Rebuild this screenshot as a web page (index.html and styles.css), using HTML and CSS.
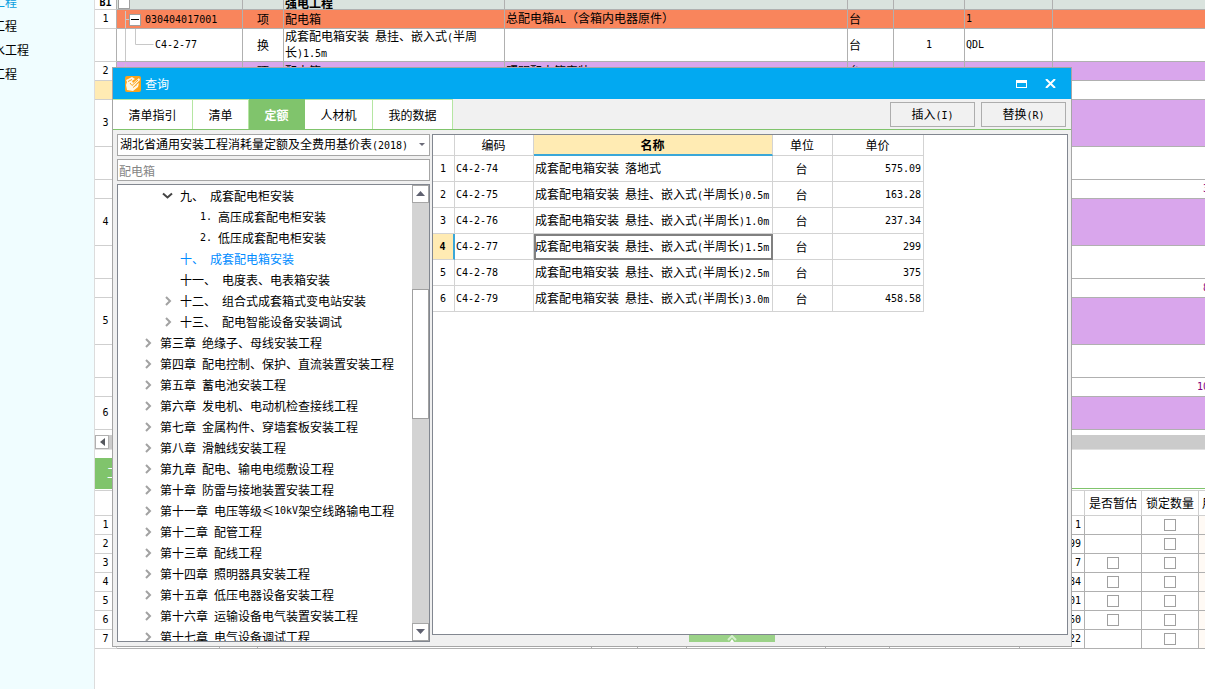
FILE: index.html
```
<!DOCTYPE html>
<html lang="zh-CN">
<head>
<meta charset="utf-8">
<title>查询</title>
<link rel="stylesheet" href="styles.css">
</head>
<body>
<aside class="side">
  <ul class="projects">
    <li class="active">工程</li>
    <li>工程</li>
    <li>水工程</li>
    <li>工程</li>
  </ul>
</aside>

<main class="main">
  <table class="bill">
    <colgroup>
      <col class="w-no"><col class="w-code"><col class="w-kind"><col class="w-title"><col class="w-feature"><col class="w-unit"><col class="w-qty"><col class="w-expr"><col>
    </colgroup>
    <tbody>
      <tr class="r-top">
        <th><div class="clip n">B1</div></th>
        <td><div class="clip"><button class="fold" aria-label="折叠"></button></div></td>
        <td></td><td><div class="clip">强电工程</div></td><td></td><td></td><td></td><td></td><td></td>
      </tr>
      <tr class="r-low orange">
        <th class="n">1</th>
        <td class="code"><svg class="guide" width="12" height="18" viewBox="0 0 12 18"><path d="M8.500 0v18M8.500 8.500h3.500"/></svg><button class="fold" aria-label="折叠"><svg width="10" height="10" viewBox="0 0 10 10"><path d="M1 4.500h8"/></svg></button><span class="n">030404017001</span></td>
        <td class="mid">项</td><td>配电箱</td><td>总配电箱<span class="n">AL</span>（含箱内电器原件）</td><td>台</td><td></td><td class="n">1</td><td></td>
      </tr>
      <tr class="r-mid">
        <th></th>
        <td class="code"><svg class="guide" width="38" height="32" viewBox="0 0 38 32"><path d="M8.500 0v32M18.500 0v15.500h18"/></svg><span class="n">C4-2-77</span></td>
        <td class="mid">换</td><td class="two">成套配电箱安装<span class="n"> </span>悬挂、嵌入式<span class="n">(</span>半周<br>长<span class="n">)1.5m</span></td><td></td><td>台</td><td class="n mid">1</td><td class="n">QDL</td><td></td>
      </tr>
      <tr class="r-low purple">
        <th class="n">2</th>
        <td class="code"><svg class="guide" width="12" height="18" viewBox="0 0 12 18"><path d="M8.500 0v18M8.500 8.500h3.500"/></svg><button class="fold" aria-label="折叠"><svg width="10" height="10" viewBox="0 0 10 10"><path d="M1 4.500h8"/></svg></button></td>
        <td class="mid">项</td><td>配电箱</td><td>照明配电箱安装</td><td>台</td><td></td><td></td><td></td>
      </tr>
      <tr class="r-low"><th class="current"></th><td></td><td></td><td></td><td></td><td></td><td></td><td></td><td></td></tr>
      <tr class="r-high purple"><th class="n">3</th><td></td><td></td><td></td><td></td><td></td><td></td><td></td><td></td></tr>
      <tr class="r-mid"><th></th><td></td><td></td><td></td><td></td><td></td><td></td><td></td><td></td></tr>
      <tr class="r-low"><th></th><td></td><td></td><td></td><td></td><td></td><td></td><td></td><td class="sum"><span class="n edge">3</span></td></tr>
      <tr class="r-high purple"><th class="n">4</th><td></td><td></td><td></td><td></td><td></td><td></td><td></td><td></td></tr>
      <tr class="r-mid"><th></th><td></td><td></td><td></td><td></td><td></td><td></td><td></td><td></td></tr>
      <tr class="r-low"><th></th><td></td><td></td><td></td><td></td><td></td><td></td><td></td><td class="sum"><span class="n edge">8</span></td></tr>
      <tr class="r-high purple"><th class="n">5</th><td></td><td></td><td></td><td></td><td></td><td></td><td></td><td></td></tr>
      <tr class="r-mid"><th></th><td></td><td></td><td></td><td></td><td></td><td></td><td></td><td></td></tr>
      <tr class="r-low"><th></th><td></td><td></td><td></td><td></td><td></td><td></td><td></td><td class="sum"><span class="n edge wide">10</span></td></tr>
      <tr class="r-mid purple"><th class="n">6</th><td></td><td></td><td></td><td></td><td></td><td></td><td></td><td></td></tr>
    </tbody>
  </table>

  <div class="hscroll">
    <button class="left" aria-label="向左滚动"><svg width="5" height="8" viewBox="0 0 5 8"><path d="M5 0v8L0 4z"/></svg></button>
  </div>

  <div class="strip"><button class="strip-tab">工</button></div>

  <table class="detail">
    <colgroup>
      <col class="w-no"><col class="d1"><col class="d2"><col class="d3"><col class="d4"><col class="d5"><col class="d6"><col class="d7"><col class="d8"><col class="d9"><col class="d10"><col class="d10"><col>
    </colgroup>
    <thead>
      <tr><th></th><th></th><th></th><th></th><th></th><th></th><th></th><th></th><th></th><th></th><th>是否暂估</th><th>锁定数量</th><th class="cut">用</th></tr>
    </thead>
    <tbody>
      <tr><th class="n">1</th><td></td><td></td><td></td><td></td><td></td><td></td><td></td><td></td><td class="n num">1</td><td></td><td><input type="checkbox" aria-label="锁定数量 1"></td><td class="cream"></td></tr>
      <tr><th class="n">2</th><td></td><td></td><td></td><td></td><td></td><td></td><td></td><td></td><td class="n num">99</td><td></td><td><input type="checkbox" aria-label="锁定数量 2"></td><td class="cream"></td></tr>
      <tr><th class="n">3</th><td></td><td></td><td></td><td></td><td></td><td></td><td></td><td></td><td class="n num">7</td><td><input type="checkbox" aria-label="是否暂估 3"></td><td><input type="checkbox" aria-label="锁定数量 3"></td><td class="cream"></td></tr>
      <tr><th class="n">4</th><td></td><td></td><td></td><td></td><td></td><td></td><td></td><td></td><td class="n num">84</td><td><input type="checkbox" aria-label="是否暂估 4"></td><td><input type="checkbox" aria-label="锁定数量 4"></td><td class="cream"></td></tr>
      <tr><th class="n">5</th><td></td><td></td><td></td><td></td><td></td><td></td><td></td><td></td><td class="n num">01</td><td><input type="checkbox" aria-label="是否暂估 5"></td><td><input type="checkbox" aria-label="锁定数量 5"></td><td class="cream"></td></tr>
      <tr><th class="n">6</th><td></td><td></td><td></td><td></td><td></td><td></td><td></td><td></td><td class="n num">60</td><td><input type="checkbox" aria-label="是否暂估 6"></td><td><input type="checkbox" aria-label="锁定数量 6"></td><td class="cream"></td></tr>
      <tr><th class="n">7</th><td></td><td></td><td></td><td></td><td></td><td></td><td></td><td></td><td class="n num">22</td><td></td><td><input type="checkbox" aria-label="锁定数量 7"></td><td class="cream"></td></tr>
    </tbody>
  </table>
</main>

<section class="dialog" role="dialog" aria-labelledby="dialog-title">
  <header class="titlebar">
    <svg class="logo" width="16" height="16" viewBox="0 0 16 16"><rect width="16" height="16" rx="2" fill="#fba31c"/><path d="M1 4l6-3 3 2-3 2 1 2 6-5 1 2-6 6 5-3-1 4-5 4-6-1-1-5 1-3z" fill="#fff6e6"/><path d="M3 5.500l4-2M5 7l2 2.500 6-5.500M8 11.500l4-3" fill="none" stroke="#fba31c"/></svg>
    <h1 id="dialog-title">查询</h1>
    <button class="win" aria-label="最大化"><svg width="11" height="8" viewBox="0 0 11 8"><path d="M0 0h11v8H0zM1 3v4h9V3z" fill="#fff" fill-rule="evenodd"/></svg></button>
    <button class="win" aria-label="关闭"><svg width="11" height="9" viewBox="0 0 11 9"><path d="M1 0l9 9M10 0L1 9" fill="none" stroke="#fff" stroke-width="2"/></svg></button>
  </header>

  <nav class="toolbar">
    <button class="tab t80">清单指引</button>
    <button class="tab t56">清单</button>
    <button class="tab t56 on">定额</button>
    <button class="tab t68">人材机</button>
    <button class="tab t80">我的数据</button>
    <div class="actions">
      <button class="act">插入<span class="n">(I)</span></button>
      <button class="act">替换<span class="n">(R)</span></button>
    </div>
  </nav>

  <div class="content">
    <div class="left-pane">
      <button class="library" aria-haspopup="listbox" aria-label="定额库"><span>湖北省通用安装工程消耗量定额及全费用基价表<span class="n">(2018)</span></span><svg width="6" height="4" viewBox="0 0 6 4"><path d="M0 0h6L3 3z"/></svg></button>
      <input class="search" type="text" placeholder="配电箱" aria-label="搜索">
      <div class="tree-box">
        <ul class="tree">
          <li class="l2"><svg class="open" width="11" height="11" viewBox="0 0 11 11"><path d="M1 3.500l4.500 4 4.500-4"/></svg>九、<span class="n"> </span>成套配电柜安装</li>
          <li class="l3"><span class="n">1. </span>高压成套配电柜安装</li>
          <li class="l3"><span class="n">2. </span>低压成套配电柜安装</li>
          <li class="l2 leaf chosen">十、<span class="n"> </span>成套配电箱安装</li>
          <li class="l2 leaf">十一、<span class="n"> </span>电度表、电表箱安装</li>
          <li class="l2"><svg width="11" height="11" viewBox="0 0 11 11"><path d="M4 2l4 4-4 4"/></svg>十二、<span class="n"> </span>组合式成套箱式变电站安装</li>
          <li class="l2"><svg width="11" height="11" viewBox="0 0 11 11"><path d="M4 2l4 4-4 4"/></svg>十三、<span class="n"> </span>配电智能设备安装调试</li>
          <li><svg width="11" height="11" viewBox="0 0 11 11"><path d="M4 2l4 4-4 4"/></svg>第三章<span class="n"> </span>绝缘子、母线安装工程</li>
          <li><svg width="11" height="11" viewBox="0 0 11 11"><path d="M4 2l4 4-4 4"/></svg>第四章<span class="n"> </span>配电控制、保护、直流装置安装工程</li>
          <li><svg width="11" height="11" viewBox="0 0 11 11"><path d="M4 2l4 4-4 4"/></svg>第五章<span class="n"> </span>蓄电池安装工程</li>
          <li><svg width="11" height="11" viewBox="0 0 11 11"><path d="M4 2l4 4-4 4"/></svg>第六章<span class="n"> </span>发电机、电动机检查接线工程</li>
          <li><svg width="11" height="11" viewBox="0 0 11 11"><path d="M4 2l4 4-4 4"/></svg>第七章<span class="n"> </span>金属构件、穿墙套板安装工程</li>
          <li><svg width="11" height="11" viewBox="0 0 11 11"><path d="M4 2l4 4-4 4"/></svg>第八章<span class="n"> </span>滑触线安装工程</li>
          <li><svg width="11" height="11" viewBox="0 0 11 11"><path d="M4 2l4 4-4 4"/></svg>第九章<span class="n"> </span>配电、输电电缆敷设工程</li>
          <li><svg width="11" height="11" viewBox="0 0 11 11"><path d="M4 2l4 4-4 4"/></svg>第十章<span class="n"> </span>防雷与接地装置安装工程</li>
          <li><svg width="11" height="11" viewBox="0 0 11 11"><path d="M4 2l4 4-4 4"/></svg>第十一章<span class="n"> </span>电压等级≤<span class="n">10kV</span>架空线路输电工程</li>
          <li><svg width="11" height="11" viewBox="0 0 11 11"><path d="M4 2l4 4-4 4"/></svg>第十二章<span class="n"> </span>配管工程</li>
          <li><svg width="11" height="11" viewBox="0 0 11 11"><path d="M4 2l4 4-4 4"/></svg>第十三章<span class="n"> </span>配线工程</li>
          <li><svg width="11" height="11" viewBox="0 0 11 11"><path d="M4 2l4 4-4 4"/></svg>第十四章<span class="n"> </span>照明器具安装工程</li>
          <li><svg width="11" height="11" viewBox="0 0 11 11"><path d="M4 2l4 4-4 4"/></svg>第十五章<span class="n"> </span>低压电器设备安装工程</li>
          <li><svg width="11" height="11" viewBox="0 0 11 11"><path d="M4 2l4 4-4 4"/></svg>第十六章<span class="n"> </span>运输设备电气装置安装工程</li>
          <li><svg width="11" height="11" viewBox="0 0 11 11"><path d="M4 2l4 4-4 4"/></svg>第十七章<span class="n"> </span>电气设备调试工程</li>
        </ul>
        <div class="vscroll">
          <button aria-label="向上滚动"><svg width="10" height="6" viewBox="0 0 10 6"><path d="M0 5h9L4.500 0z"/></svg></button>
          <div class="track"><div class="thumb"></div></div>
          <button aria-label="向下滚动"><svg width="10" height="6" viewBox="0 0 10 6"><path d="M0 0h9L4.500 5z"/></svg></button>
        </div>
      </div>
    </div>

    <div class="right-pane">
      <div class="sheet">
        <table class="quota">
          <colgroup><col class="q0"><col class="q1"><col class="q2"><col class="q3"><col class="q4"></colgroup>
          <thead>
            <tr><th></th><th>编码</th><th class="sorted">名称</th><th>单位</th><th>单价</th></tr>
          </thead>
          <tbody>
            <tr><th class="n">1</th><td class="n">C4-2-74</td><td>成套配电箱安装<span class="n"> </span>落地式</td><td class="mid">台</td><td class="n num">575.09</td></tr>
            <tr><th class="n">2</th><td class="n">C4-2-75</td><td>成套配电箱安装<span class="n"> </span>悬挂、嵌入式<span class="n">(</span>半周长<span class="n">)0.5m</span></td><td class="mid">台</td><td class="n num">163.28</td></tr>
            <tr><th class="n">3</th><td class="n">C4-2-76</td><td>成套配电箱安装<span class="n"> </span>悬挂、嵌入式<span class="n">(</span>半周长<span class="n">)1.0m</span></td><td class="mid">台</td><td class="n num">237.34</td></tr>
            <tr><th class="n here">4</th><td class="n">C4-2-77</td><td class="focus">成套配电箱安装<span class="n"> </span>悬挂、嵌入式<span class="n">(</span>半周长<span class="n">)1.5m</span></td><td class="mid">台</td><td class="n num">299</td></tr>
            <tr><th class="n">5</th><td class="n">C4-2-78</td><td>成套配电箱安装<span class="n"> </span>悬挂、嵌入式<span class="n">(</span>半周长<span class="n">)2.5m</span></td><td class="mid">台</td><td class="n num">375</td></tr>
            <tr><th class="n">6</th><td class="n">C4-2-79</td><td>成套配电箱安装<span class="n"> </span>悬挂、嵌入式<span class="n">(</span>半周长<span class="n">)3.0m</span></td><td class="mid">台</td><td class="n num">458.58</td></tr>
          </tbody>
        </table>
      </div>
      <button class="expander" aria-label="展开"><svg width="10" height="7" viewBox="0 0 10 7"><path d="M1 5l4-4 4 4" fill="none" stroke="#d6efce" stroke-width="2"/><path d="M3 7l2-3 2 3z" fill="#fff"/></svg></button>
    </div>
  </div>
</section>
</body>
</html>
```
FILE: styles.css
```
* { box-sizing: border-box; }

body {
  margin: 0;
  display: flex;
  min-height: 100vh;
  overflow: hidden;
  background: #fff;
  color: #000;
  font: 12px/16px "Noto Sans CJK SC", sans-serif;
}

button, input { font: inherit; color: inherit; margin: 0; padding: 0; border: 0; border-radius: 0; background: none; }
ul { list-style: none; margin: 0; padding: 0; }
svg { display: block; flex: none; }

/* half-width characters: 6px advance */
.n { font-family: "DejaVu Sans Mono", monospace; font-size: 10px; white-space: pre; }

/* sidebar */
.side { flex: none; width: 95px; overflow: hidden; background: #f0fdff; border-right: 1px solid #dcdcdc; }
.projects { margin: -10px 0 0 -7px; }
.projects li { line-height: 24px; white-space: nowrap; }
.projects .active { color: #0a9fe0; }

.main { flex: 1; min-width: 0; overflow: hidden; }

table { border-collapse: separate; border-spacing: 0; table-layout: fixed; }
th, td { padding: 0; font-weight: normal; white-space: nowrap; overflow: hidden; }
.mid { text-align: center; }
.num { text-align: right; }

/* bill of quantities */
.bill { width: 100%; }
.bill td { padding-left: 1px; text-align: left; border-right: 1px solid #b0b0b0; border-bottom: 1px solid #b0b0b0; }
.bill td:last-child { border-right: 0; }
.bill td.mid { padding-left: 0; text-align: center; }
.bill th { background: #fff; border-right: 1px solid #b0b0b0; border-bottom: 1px solid #cfcfcf; }
.bill th.current { background: #ffebb3; }
.w-no { width: 22px; }
.w-code { width: 126px; }
.w-kind { width: 41px; }
.w-title { width: 221px; }
.w-feature { width: 343px; }
.w-unit { width: 46px; }
.w-qty { width: 71px; }
.w-expr { width: 88px; }
.r-top { height: 10px; font-weight: bold; }
.r-top td { background: #dae3de; }
.r-top th { font-weight: bold; }
.clip { height: 9px; line-height: 5px; font-weight: bold; }
.r-top .fold { margin-top: -6px; }
.r-low { height: 19px; }
.r-mid { height: 33px; }
.r-high { height: 47px; }
.orange td { background: #f9855c; }
.purple td { background: #d9a6ec; }
.bill .two { line-height: 14px; }
.bill .code { padding-left: 0; }
.code > * { display: inline-block; vertical-align: middle; }
.code > .guide { margin: -4px 0; }
.guide path { fill: none; stroke: #c8c8c8; }
.fold { width: 12px; height: 12px; margin-right: 4px; background: #fff; border: 1px solid #a0a0a0; }
.fold svg path { stroke: #000; fill: none; }
.bill td.sum { color: #800080; text-align: right; }
.edge { display: block; width: 2px; margin-left: auto; overflow: hidden; text-align: left; }
.edge.wide { width: 8px; }

.hscroll { margin-top: 5px; height: 15px; background: #cbcbcb; border-bottom: 1px solid #e0e0e0; }
.left { display: grid; place-items: center; width: 14px; height: 14px; background: #fff; border: 1px solid #b0b0b0; }
.left path { fill: #55585e; }

.strip { margin-top: 8px; height: 31px; border-bottom: 1px solid #80c46c; }
.strip-tab { height: 30px; padding: 0 12px; background: #80c46c; color: #fff; }

/* resource detail */
.detail { width: 100%; margin-top: 1px; border-top: 1px solid #d0d0d0; }
.detail tr { height: 19px; }
.detail thead tr { height: 25px; }
.detail th { border-right: 1px solid #d0d0d0; border-bottom: 1px solid #d0d0d0; }
.detail td { text-align: center; border-right: 1px solid #b0b0b0; border-bottom: 1px solid #b0b0b0; }
.detail td.num { text-align: right; padding-right: 3px; }
.detail .cream { background: #fffaf5; border-right: 0; }
.detail .cut { text-align: left; padding-left: 3px; border-right: 0; }
.detail input { appearance: none; display: block; width: 12px; height: 12px; margin: 0 auto; background: #fff; border: 1px solid #a0a0a0; }
.d1 { width: 103px; }
.d2 { width: 38px; }
.d3 { width: 334px; }
.d4 { width: 46px; }
.d5 { width: 49px; }
.d6 { width: 139px; }
.d7 { width: 64px; }
.d8 { width: 130px; }
.d9 { width: 65px; }
.d10 { width: 57px; }

/* dialog window */
.dialog { position: absolute; left: 112px; right: 133px; top: 67px; background: #f0f0f0; border: 1px solid #a6a6a6; }
.titlebar { display: flex; align-items: center; height: 31px; padding: 0 15px 0 12px; background: #02a9f1; color: #fff; }
.titlebar h1 { flex: 1; margin: 0 0 0 4px; font-size: 12px; font-weight: normal; }
.win + .win { margin-left: 18px; }

.toolbar { display: flex; height: 31px; background: #f1f1f1; border-bottom: 1px solid #80c46c; }
.tab { background: #fff; border-top: 1px solid #b5e6a2; border-right: 1px solid #b5e6a2; }
.tab.on { background: #80c46c; border-color: #80c46c; color: #fff; font-weight: bold; }
.t80 { width: 80px; }
.t56 { width: 56px; }
.t68 { width: 68px; }
.actions { display: flex; gap: 6px; margin: 3px 5px 2px auto; }
.act { width: 85px; border: 1px solid #adadad; background: #f1f1f1; }

.content { display: flex; gap: 2px; padding: 4px 3px 4px 4px; }
.left-pane { flex: none; width: 313px; display: flex; flex-direction: column; }
.library { display: flex; align-items: center; justify-content: space-between; height: 22px; padding: 0 4px 0 2px; background: #fff; border: 1px solid #a6a6a6; white-space: nowrap; }
.library path { fill: #6b6b78; }
.search { height: 22px; margin: 3px 0; padding: 0 1px; background: #fff; border: 1px solid #a6a6a6; }
.search::placeholder { color: #858585; opacity: 1; }

.tree-box { display: flex; height: 458px; background: #fff; border: 1px solid #828790; overflow: hidden; }
.tree { flex: 1; white-space: nowrap; }
.tree li { display: flex; align-items: center; height: 21px; padding-left: 24px; }
.tree li svg { margin-right: 7px; }
.tree li.l2 { padding-left: 44px; }
.tree li.leaf { padding-left: 62px; }
.tree li.l3 { padding-left: 82px; }
.tree .chosen { color: #008cff; }
.tree path { fill: none; stroke: #a2a2a2; stroke-width: 2; }
.tree .open path { stroke: #444; }
.vscroll { flex: none; width: 17px; display: flex; flex-direction: column; background: #d3d3d3; }
.vscroll button { display: grid; place-items: center; height: 18px; background: #fff; border: 1px solid #a6a6a6; }
.vscroll button path { fill: #5f6170; }
.track { flex: 1; padding-top: 86px; }
.thumb { height: 130px; background: #fff; border: 1px solid #a0a0a0; }

.right-pane { flex: 1; min-width: 0; display: flex; flex-direction: column; }
.sheet { height: 501px; background: #fff; border: 1px solid #828790; overflow: hidden; }
.quota { width: 491px; }
.quota tr { height: 26px; }
.quota thead tr { height: 21px; }
.quota th, .quota td { padding: 0 2px 0 1px; border-right: 1px solid #d3d3d3; border-bottom: 1px solid #d3d3d3; }
.quota .mid { padding-right: 3px; }
.quota .sorted { background: #ffebb3; border-bottom: 2px solid #3aa7d8; font-weight: bold; }
.quota .here { background: #ffebb3; border-right: 2px solid #3aa7d8; font-weight: bold; }
.quota .focus { outline: 2px solid #808080; outline-offset: -2px; }
.q0 { width: 22px; }
.q1 { width: 79px; }
.q2 { width: 239px; }
.q3 { width: 60px; }
.q4 { width: 91px; }
.expander { display: grid; place-items: center; align-self: center; width: 86px; height: 7px; margin-right: 36px; background: #9bd288; }
```
